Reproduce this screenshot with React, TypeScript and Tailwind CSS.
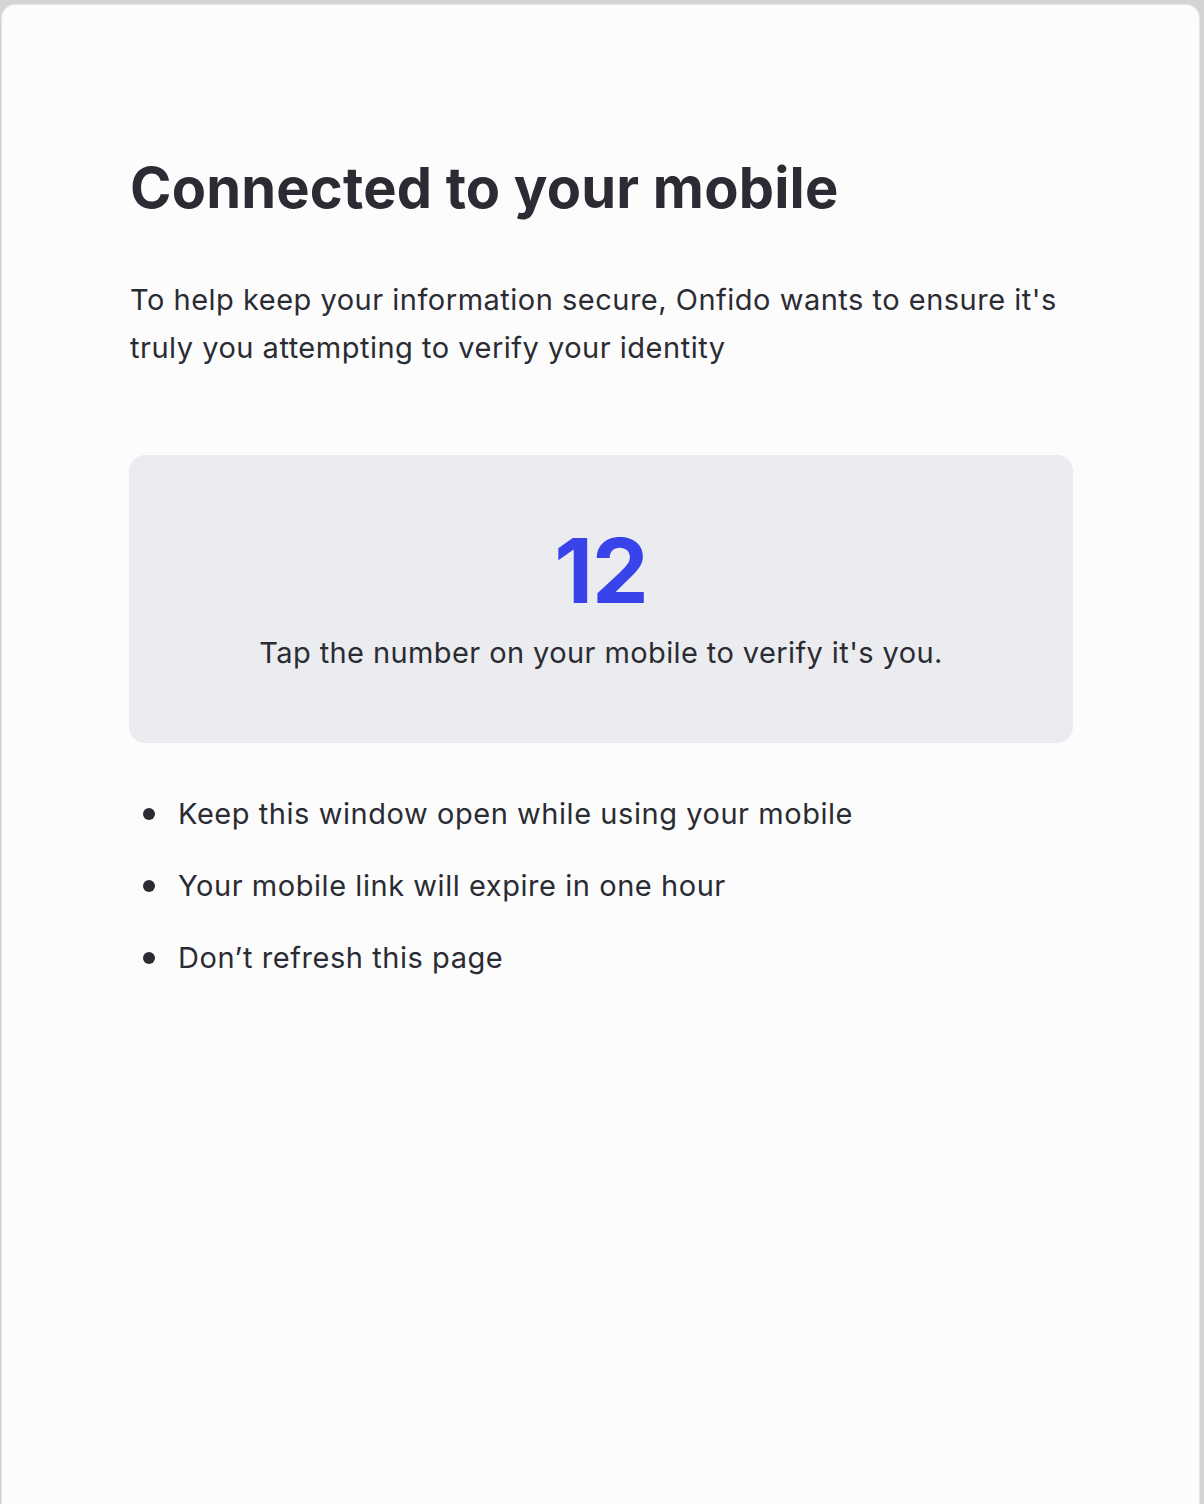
export default function App() {
  const bullets = [
    'Keep this window open while using your mobile',
    'Your mobile link will expire in one hour',
    'Don’t refresh this page',
  ];

  return (
    <div className="w-[1204px] h-[1504px] bg-[#d4d4d4] pt-[4px] pl-[1px] pr-[4px] overflow-hidden">
      <div
        className="h-full bg-[#fcfcfc] rounded-t-[14px] border border-b-0 border-[#e4e4e8] text-[#2b2c33]"
        style={{ fontFamily: 'Inter, "Noto Sans", sans-serif' }}
      >
        <div className="pl-[127px] pr-[126px] pt-[151px]">
          <h1 className="ml-[1px] text-[56px] font-bold leading-[64px] tracking-[0.2px]">Connected to your mobile</h1>

          <p className="ml-[1px] mt-[56px] text-[29px] leading-[48px] tracking-[0.5px]">
            To help keep your information secure, Onfido wants to ensure it's truly you attempting to verify your identity
          </p>

          <div className="mt-[83px] h-[288px] rounded-[16px] bg-[#ebecf0] flex flex-col items-center pt-[66px]">
            <div className="text-[90px] font-bold leading-[100px] text-[#3843ea] tracking-[-1px]">12</div>
            <p className="mt-[8px] text-[29px] leading-[48px] tracking-[0.4px]">Tap the number on your mobile to verify it's you.</p>
          </div>

          <ul className="mt-[47px] flex flex-col gap-[24px]">
            {bullets.map((b) => (
              <li key={b} className="flex items-center text-[29px] leading-[48px] tracking-[0.55px]">
                <span className="ml-[14px] mr-[23px] w-[12px] h-[12px] rounded-full bg-[#2b2c33] shrink-0" />
                {b}
              </li>
            ))}
          </ul>
        </div>
      </div>
    </div>
  );
}
